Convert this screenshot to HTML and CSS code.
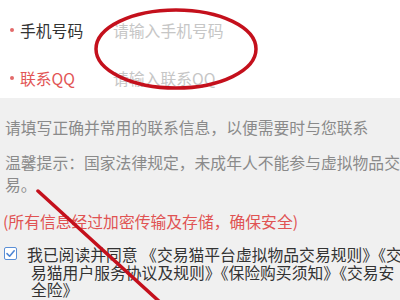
FILE: index.html
```html
<!DOCTYPE html>
<html lang="zh-CN">
<head>
<meta charset="utf-8">
<title>联系方式</title>
<link rel="stylesheet" href="styles.css">
</head>
<body>
<div class="page">
  <section class="form">
    <div class="row">
      <span class="star"></span>
      <span class="label">手机号码</span>
      <span class="placeholder">请输入手机号码</span>
    </div>
    <div class="row">
      <span class="star"></span>
      <span class="label label-red">联系QQ</span>
      <span class="placeholder">请输入联系QQ</span>
    </div>
  </section>
  <section class="info">
    <p class="note">请填写正确并常用的联系信息，以便需要时与您联系</p>
    <p class="note note-tip">温馨提示：国家法律规定，未成年人不能参与虚拟物品交<br>易。</p>
    <p class="note note-red">(所有信息经过加密传输及存储，确保安全)</p>
    <div class="terms">
      <span class="checkbox">
        <svg viewBox="0 0 13 13" width="13" height="13"><path d="M3 6.6 L5.6 9.2 L10.2 3.8" fill="none" stroke="#4f86d4" stroke-width="1.6" stroke-linecap="round" stroke-linejoin="round"/></svg>
      </span>
      <p class="terms-text">我已阅读并同意 《交易猫平台虚拟物品交易规则》《交<br>易猫用户服务协议及规则》《保险购买须知》《交易安<br>全险》</p>
    </div>
  </section>
  <svg class="marks" viewBox="0 0 400 300" width="400" height="300">
    <ellipse cx="176" cy="49" rx="80" ry="39" fill="none" stroke="#c4101c" stroke-width="3.5"/>
    <line x1="38" y1="191" x2="162" y2="304" stroke="#c4101c" stroke-width="3.5" stroke-linecap="round"/>
  </svg>
</div>
</body>
</html>
```
FILE: styles.css
```css
html, body {
  margin: 0;
  padding: 0;
  overflow: hidden;
  width: 400px;
  height: 300px;
  background: #f0f0f0;
}
.page {
  position: relative;
  width: 420px;
  height: 300px;
  font-family: "Noto Sans CJK SC", "Noto Sans", sans-serif;
  font-size: 15.8px;
}
.form {
  background: #ffffff;
  height: 98px;
  box-sizing: border-box;
  padding-top: 10px;
  display: flex;
  flex-direction: column;
  gap: 8px;
}
.row {
  height: 40px;
  display: flex;
  align-items: center;
}
.star {
  width: 4px;
  height: 4px;
  border-radius: 50%;
  background: #e36a6a;
  margin-left: 10px;
  margin-right: 6px;
}
.label {
  color: #333333;
  width: 93px;
}
.label-red {
  color: #e25555;
}
.placeholder {
  color: #c6c6c6;
}
.info {
  padding: 19px 0 0 5px;
}
.note {
  margin: 0;
  line-height: 22px;
  color: #8a8a8a;
  white-space: nowrap;
}
.note-tip {
  margin-top: 13px;
}
.note-red {
  margin-top: 15px;
  color: #e05353;
  margin-left: -2px;
}
.terms {
  display: flex;
  align-items: flex-start;
  margin-top: 13px;
  margin-left: -1px;
}
.checkbox {
  width: 13px;
  height: 13px;
  box-sizing: border-box;
  border: 1.5px solid #5b8fd6;
  border-radius: 2px;
  background: #ffffff;
  margin-top: 1px;
  display: flex;
}
.checkbox svg {
  margin: -1.5px;
}
.terms-text {
  margin: 0 0 0 10px;
  padding-left: 4px;
  text-indent: -4px;
  line-height: 17.5px;
  color: #333333;
  white-space: nowrap;
}
.marks {
  position: absolute;
  left: 0;
  top: 0;
  pointer-events: none;
}
```
